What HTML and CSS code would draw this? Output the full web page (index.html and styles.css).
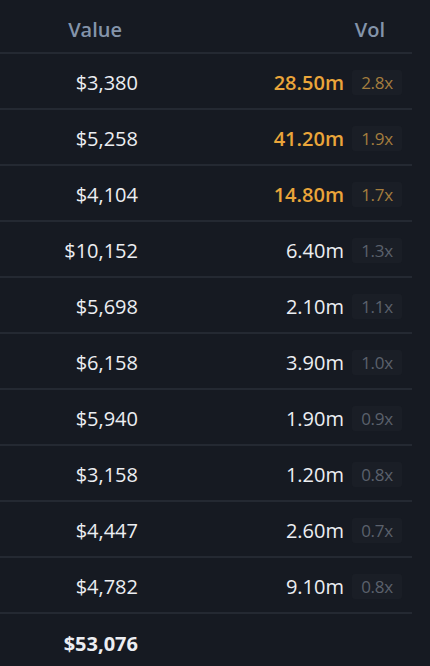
FILE: index.html
```html
<!DOCTYPE html>
<html lang="en">
<head>
    <meta charset="UTF-8">
    <meta name="viewport" content="width=device-width, initial-scale=1.0">
    <title>Trades</title>
    <link rel="stylesheet" href="styles.css">
</head>
<body>
    <div class="table">
        <div class="row head">
            <div class="value">Value</div>
            <div class="vol">Vol</div>
        </div>
        <div class="row">
            <div class="value">$3,380</div>
            <div class="vol"><span class="num hot">28.50m</span><span class="mult hot">2.8x</span></div>
        </div>
        <div class="row">
            <div class="value">$5,258</div>
            <div class="vol"><span class="num hot">41.20m</span><span class="mult hot">1.9x</span></div>
        </div>
        <div class="row">
            <div class="value">$4,104</div>
            <div class="vol"><span class="num hot">14.80m</span><span class="mult hot">1.7x</span></div>
        </div>
        <div class="row">
            <div class="value">$10,152</div>
            <div class="vol"><span class="num">6.40m</span><span class="mult">1.3x</span></div>
        </div>
        <div class="row">
            <div class="value">$5,698</div>
            <div class="vol"><span class="num">2.10m</span><span class="mult">1.1x</span></div>
        </div>
        <div class="row">
            <div class="value">$6,158</div>
            <div class="vol"><span class="num">3.90m</span><span class="mult">1.0x</span></div>
        </div>
        <div class="row">
            <div class="value">$5,940</div>
            <div class="vol"><span class="num">1.90m</span><span class="mult">0.9x</span></div>
        </div>
        <div class="row">
            <div class="value">$3,158</div>
            <div class="vol"><span class="num">1.20m</span><span class="mult">0.8x</span></div>
        </div>
        <div class="row">
            <div class="value">$4,447</div>
            <div class="vol"><span class="num">2.60m</span><span class="mult">0.7x</span></div>
        </div>
        <div class="row">
            <div class="value">$4,782</div>
            <div class="vol"><span class="num">9.10m</span><span class="mult">0.8x</span></div>
        </div>
        <div class="row total">
            <div class="value">$53,076</div>
            <div class="vol"></div>
        </div>
    </div>
</body>
</html>
```

FILE: styles.css
```css
body {
    margin: 0;
    background-color: #161a22;
    font-family: "Open Sans", "Noto Sans", sans-serif;
    color: #eceef2;
}
.table {
    width: 412px;
}
.row {
    display: flex;
    align-items: center;
    height: 56px;
    padding-top: 3px;
    box-sizing: border-box;
    border-bottom: 2px solid #242932;
    font-size: 20px;
    font-weight: 500;
}
.row .value {
    width: 138px;
    text-align: right;
}
.row .vol {
    flex: 1;
    display: flex;
    justify-content: flex-end;
    align-items: center;
    padding-right: 10px;
}
.head {
    height: 54px;
    padding-top: 6px;
    font-weight: 600;
    color: #8494aa;
}
.head .value {
    width: 122px;
}
.head .vol {
    padding-right: 27px;
}
.num.hot {
    color: #eaa53a;
    font-weight: 600;
}
.mult {
    width: 50px;
    margin-left: 8px;
    padding: 1px 0;
    text-align: center;
    font-size: 17px;
    font-weight: 400;
    letter-spacing: -0.3px;
    color: #5b616c;
    background-color: #1a1e26;
    border-radius: 3px;
}
.mult.hot {
    color: #a47d3e;
}
.total {
    border-bottom: none;
    font-weight: 700;
}
```
